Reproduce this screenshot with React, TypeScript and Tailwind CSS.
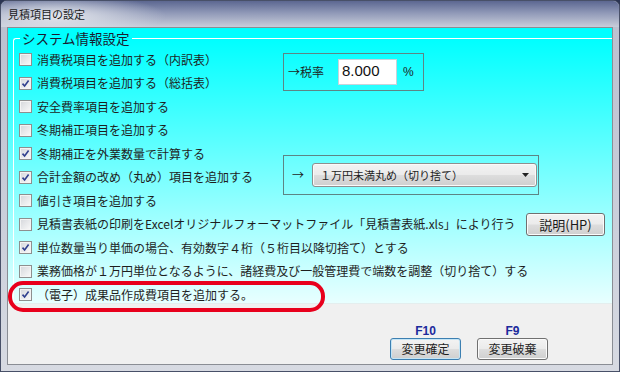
import React from "react";

const jp = "font-['Noto_Sans_CJK_JP',sans-serif]";
const btnFace =
  "bg-[linear-gradient(to_bottom,#f3f3f3_0%,#ebebeb_48%,#dddddd_52%,#cfcfcf_100%)]";

function CheckBox({ checked }: { checked: boolean }) {
  return (
    <span className="flex h-[13px] w-[13px] shrink-0 items-center justify-center border border-[#8e8f8f] bg-[#f4f4f4]">
      <span className="relative flex h-[9px] w-[9px] items-center justify-center bg-[linear-gradient(135deg,#d8dade,#f7f7f7)]">
        {checked && (
          <svg width="11" height="11" viewBox="0 0 11 11" className="absolute left-[-1px] top-[-1px]">
            <path d="M2.5 5.6 L4.6 8 L8.6 2.6" fill="none" stroke="#2f3f8e" strokeWidth="1.6" />
          </svg>
        )}
      </span>
    </span>
  );
}

function Row({ checked, text, className }: { checked: boolean; text: string; className?: string }) {
  return (
    <div className={`flex items-center gap-[5px] ${className ?? ""}`}>
      <CheckBox checked={checked} />
      <span className="whitespace-nowrap text-[12px] leading-[16px] text-[#1e1e1e]">{text}</span>
    </div>
  );
}

function WinButton({ label, focused, className }: { label: string; focused?: boolean; className?: string }) {
  return (
    <div
      className={`flex items-center justify-center rounded-[3px] border ${
        focused ? "border-[#3c7fb1] shadow-[inset_0_0_0_1px_#c4e5f6]" : "border-[#707070] shadow-[inset_0_0_0_1px_#fbfbfb]"
      } ${btnFace} ${className ?? ""}`}
    >
      {label}
    </div>
  );
}

export default function App() {
  return (
    <div className={`relative h-[372px] w-[620px] bg-[#2b3452] ${jp}`}>
      <div className="flex h-full w-full flex-col rounded-t-[7px] border border-[#485068] bg-[linear-gradient(to_bottom,#b9bfcf,#d7dae2)]">
        {/* title bar */}
        <div className="flex h-[26px] items-center rounded-t-[6px] bg-[radial-gradient(ellipse_110px_22px_at_55px_15px,rgba(228,231,237,1),rgba(228,231,237,0)),linear-gradient(to_bottom,#5c6791,#8f98b7_45%,#c8cdda)] pl-[7px]">
          <span className="text-[11px] leading-[14px] text-[#1b1b1b]">見積項目の設定</span>
        </div>

        {/* client area */}
        <div className="mx-[6px] flex flex-1 flex-col border border-[#8a8d94] bg-[#f0f0f0]">
          <div className="h-[276px] overflow-hidden border-b border-[#e4eeee] bg-[linear-gradient(to_bottom,#00ffff_0%,#00ffff_4%,#e8ffff_100%)]">
            <fieldset className="ml-[5px] rounded-tl-[3px] border-l border-t border-white">
              <legend className="ml-[6px] px-[2px] text-[13.5px] leading-[20px] text-[#1a1a30]">システム情報設定</legend>
              <div className="grid auto-rows-[23.5px] grid-cols-[264px_1fr] pl-[5px]">
                <Row className="col-start-1 row-start-1" checked={false} text="消費税項目を追加する（内訳表）" />
                <Row className="col-start-1 row-start-2" checked text="消費税項目を追加する（総括表）" />

                <div className="col-start-2 row-span-2 row-start-1 flex h-[38px] w-[141px] items-center self-center justify-self-start border border-[#5d8585] pl-[4px]">
                  <span className="text-[12px] text-[#1e1e1e]">→税率</span>
                  <div className="ml-[14px] flex h-[26px] w-[59px] items-center border border-[#c8d3da] bg-white pl-[3px] font-['Liberation_Sans',sans-serif] text-[15px] text-[#111]">
                    8.000
                  </div>
                  <span className="ml-[6px] font-['Liberation_Sans',sans-serif] text-[12px] text-[#1e1e1e]">%</span>
                </div>

                <Row className="col-start-1 row-start-3" checked={false} text="安全費率項目を追加する" />
                <Row className="col-start-1 row-start-4" checked={false} text="冬期補正項目を追加する" />
                <Row className="col-start-1 row-start-5" checked text="冬期補正を外業数量で計算する" />
                <Row className="col-start-1 row-start-6" checked text="合計金額の改め（丸め）項目を追加する" />

                <div className="col-start-2 row-span-3 row-start-5 mt-[13px] flex h-[40px] w-[256px] items-center self-start justify-self-start border border-[#5d8585] pl-[8px]">
                  <span className="text-[12px] text-[#1e1e1e]">→</span>
                  <div className={`ml-[8px] flex h-[24px] w-[225px] items-center justify-between rounded-[3px] border border-[#8e8f8f] pl-[7px] pr-[7px] shadow-[inset_0_0_0_1px_#fafafa] ${btnFace}`}>
                    <span className="text-[11px] text-[#1e1e1e]">１万円未満丸め（切り捨て）</span>
                    <svg width="7" height="4" viewBox="0 0 7 4">
                      <path d="M0 0 H7 L3.5 4 Z" fill="#222" />
                    </svg>
                  </div>
                </div>

                <Row className="col-start-1 row-start-7" checked={false} text="値引き項目を追加する" />
                <div className="col-span-2 col-start-1 row-start-8 flex items-center justify-between pr-[7px]">
                  <Row checked={false} text="見積書表紙の印刷をExcelオリジナルフォーマットファイル「見積書表紙.xls」により行う" />
                  <WinButton label="説明(HP)" className="h-[23px] w-[79px] text-[13px] text-[#1a1a1a]" />
                </div>
                <Row className="col-span-2 col-start-1 row-start-9" checked text="単位数量当り単価の場合、有効数字４桁（５桁目以降切捨て）とする" />
                <Row className="col-span-2 col-start-1 row-start-10" checked={false} text="業務価格が１万円単位となるように、諸経費及び一般管理費で端数を調整（切り捨て）する" />
                <Row className="col-span-2 col-start-1 row-start-11" checked text="（電子）成果品作成費項目を追加する。" />
              </div>
            </fieldset>
          </div>

          {/* buttons */}
          <div className="flex flex-1 justify-end gap-[16px] pr-[64px] pt-[20px]">
            <div className="flex flex-col items-center">
              <span className="font-['Liberation_Sans',sans-serif] text-[12px] font-bold leading-[14px] text-[#1b2a9c]">F10</span>
              <WinButton focused label="変更確定" className="h-[22px] w-[71px] text-[12px] text-[#1e1e1e]" />
            </div>
            <div className="flex flex-col items-center">
              <span className="font-['Liberation_Sans',sans-serif] text-[12px] font-bold leading-[14px] text-[#1b2a9c]">F9</span>
              <WinButton label="変更破棄" className="h-[22px] w-[71px] text-[12px] text-[#1e1e1e]" />
            </div>
          </div>
        </div>
        <div className="h-[6px]" />
      </div>

      {/* red highlight drawn over the dialog */}
      <div className="absolute left-[8px] top-[281px] h-[31px] w-[317px] rounded-[15px] border-[4px] border-[#e8001c]" />
    </div>
  );
}
